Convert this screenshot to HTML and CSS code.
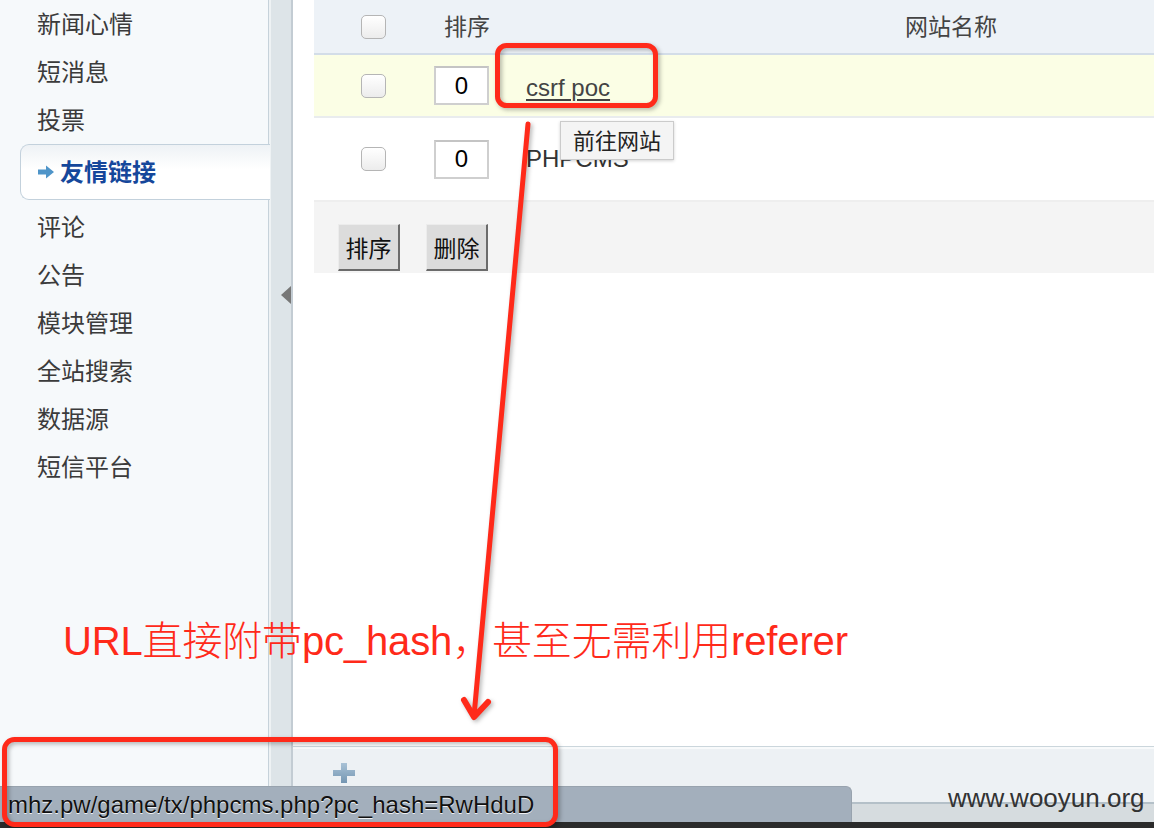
FILE: index.html
```html
<!DOCTYPE html>
<html lang="zh-CN">
<head>
<meta charset="utf-8">
<title>友情链接</title>
<link rel="stylesheet" href="styles.css">
</head>
<body>
<div class="page">
  <div class="main">
    <nav class="sidebar">
      <ul class="nav">
        <li class="nav-item">新闻心情</li>
        <li class="nav-item">短消息</li>
        <li class="nav-item">投票</li>
        <li class="nav-item active">
          <svg class="arrow" width="16" height="14" viewBox="0 0 16 14"><path d="M0 4.5h8V0.5l8 6.5-8 6.5V9.5H0z" fill="#4f95c9"/></svg>
          <span>友情链接</span>
        </li>
        <li class="nav-item">评论</li>
        <li class="nav-item">公告</li>
        <li class="nav-item">模块管理</li>
        <li class="nav-item">全站搜索</li>
        <li class="nav-item">数据源</li>
        <li class="nav-item">短信平台</li>
      </ul>
    </nav>
    <div class="splitter"><span class="collapse"></span></div>
    <div class="content">
      <div class="list">
        <div class="row head">
          <div class="cell-check"><input class="check" type="checkbox"></div>
          <div class="cell-order head-order">排序</div>
          <div class="cell-name head-name">网站名称</div>
        </div>
        <div class="row r1">
          <div class="cell-check"><input class="check" type="checkbox"></div>
          <div class="cell-order"><input class="order" type="text" value="0"></div>
          <div class="cell-name"><a class="link" href="#">csrf poc</a></div>
        </div>
        <div class="row r2">
          <div class="cell-check"><input class="check" type="checkbox"></div>
          <div class="cell-order"><input class="order" type="text" value="0"></div>
          <div class="cell-name"><span class="plain">PHPCMS</span></div>
          <div class="tooltip">前往网站</div>
        </div>
        <div class="actions">
          <button class="btn">排序</button>
          <button class="btn">删除</button>
        </div>
      </div>
      <div class="fill"></div>
      <div class="toolbar">
        <svg class="plus" width="22" height="20" viewBox="0 0 22 20">
          <defs><linearGradient id="pg" x1="0" y1="0" x2="0" y2="1"><stop offset="0" stop-color="#a9c2d6"/><stop offset="1" stop-color="#7496b2"/></linearGradient></defs>
          <path d="M8 0h6v7h8v6h-8v7H8v-7H0V7h8z" fill="url(#pg)"/>
        </svg>
      </div>
    </div>
  </div>
  <div class="browserbar"></div>
  <div class="edge"></div>
  <div class="statusbar">mhz.pw/game/tx/phpcms.php?pc_hash=RwHduD</div>
  <div class="watermark">www.wooyun.org</div>
  <svg class="annot" width="1154" height="828" viewBox="0 0 1154 828">
    <g class="red" fill="none" stroke="#ff2a1a" stroke-linecap="round" stroke-linejoin="round">
      <rect x="497.5" y="45.5" width="158" height="60" rx="9" stroke-width="5"/>
      <path d="M528 124L474 716" stroke-width="5"/>
      <path d="M464 700L474 717L488 702" stroke-width="6"/>
      <rect x="4.5" y="739.5" width="551" height="85" rx="10" stroke-width="5"/>
    </g>
  </svg>
  <div class="annot-text">URL直接附带pc_hash，甚至无需利用referer</div>
</div>
</body>
</html>
```

FILE: styles.css
```css
html, body {
  margin: 0;
  padding: 0;
}
body {
  font-family: "Noto Sans CJK SC", "Liberation Sans", sans-serif;
  color: #333;
  background: #fff;
}
.page {
  position: relative;
  width: 1154px;
  height: 828px;
  overflow: hidden;
  display: flex;
  flex-direction: column;
  background: #fff;
}
.main {
  height: 802px;
  display: flex;
}

/* sidebar */
.sidebar {
  width: 268px;
  flex: none;
  border-right: 1px solid #c6d2da;
  background: #f6f9fb;
}
.nav {
  list-style: none;
  margin: -1px 0 0;
  padding: 0;
}
.nav-item {
  height: 48px;
  line-height: 48px;
  padding-left: 37px;
  font-size: 24px;
  color: #3b3b3b;
}
.nav-item.active {
  position: relative;
  height: 54px;
  line-height: 54px;
  margin: 1px -2px 2px 20px;
  padding-left: 17px;
  border: 1px solid #c3d1dc;
  border-right: 0;
  border-radius: 9px 0 0 9px;
  background: linear-gradient(#eef2f5, #ffffff 45%);
  color: #15479b;
  font-weight: bold;
  display: flex;
  align-items: center;
  gap: 6px;
}
.nav-item.active span {
  position: relative;
  top: -1px;
}
.arrow {
  flex: none;
}

/* splitter */
.splitter {
  width: 20px;
  flex: none;
  border-left: 2px solid #eef2f4;
  border-right: 2px solid #c3ccd3;
  background: #dde4e8;
  display: flex;
  justify-content: flex-end;
  align-items: flex-start;
  padding-top: 286px;
}
.collapse {
  width: 0;
  height: 0;
  border-top: 9px solid transparent;
  border-bottom: 9px solid transparent;
  border-right: 10px solid #777;
}

/* content */
.content {
  flex: 1;
  min-width: 0;
  display: flex;
  flex-direction: column;
}
.list {
  padding-left: 21px;
}
.row {
  display: flex;
  align-items: center;
  position: relative;
}
.cell-check {
  width: 120px;
  flex: none;
  padding-left: 47px;
  box-sizing: border-box;
  display: flex;
  align-items: center;
}
.cell-order {
  width: 92px;
  flex: none;
  display: flex;
  align-items: center;
}
.cell-name {
  flex: 1;
}
.row.head {
  height: 53px;
  background: #edf2f7;
  border-bottom: 2px solid #d3dde8;
  font-size: 23px;
  color: #444;
}
.head-order {
  padding-left: 10px;
  box-sizing: border-box;
  position: relative;
  top: -2px;
}
.head-name {
  padding-left: 379px;
  position: relative;
  top: -2px;
}
.row.r1 {
  height: 61px;
  background: #fbfee5;
  border-bottom: 2px solid #e9ecee;
}
.row.r2 {
  height: 82px;
  border-bottom: 2px solid #eeeeee;
}
.check {
  appearance: none;
  -webkit-appearance: none;
  width: 25px;
  height: 24px;
  margin: 0;
  border: 1px solid #b5b5b5;
  border-radius: 5px;
  background: linear-gradient(#ffffff, #ececec);
  box-sizing: border-box;
}
.order {
  width: 55px;
  height: 39px;
  box-sizing: border-box;
  border: 2px solid #cfcfcf;
  border-top-color: #c4c4c4;
  padding: 0;
  margin: 0;
  background: #fff;
  font-family: "Liberation Sans", sans-serif;
  font-size: 24px;
  color: #000;
  text-align: center;
  outline: none;
}
.link {
  font-family: "Liberation Sans", sans-serif;
  font-size: 24px;
  color: #444;
  text-decoration: underline;
  text-underline-offset: 3px;
  position: relative;
  top: 2px;
}
.plain {
  font-family: "Liberation Sans", sans-serif;
  font-size: 24px;
  color: #333;
}
.tooltip {
  position: absolute;
  left: 246px;
  top: 3px;
  height: 39px;
  box-sizing: border-box;
  padding: 0 12px;
  line-height: 35px;
  font-size: 22px;
  color: #222;
  background: #f4f4f4;
  border: 1px solid #cbcbcb;
  box-shadow: 0 1px 3px rgba(0, 0, 0, 0.18);
}
.actions {
  height: 71px;
  box-sizing: border-box;
  background: #f4f4f4;
  display: flex;
  align-items: flex-end;
  gap: 26px;
  padding: 0 0 2px 24px;
}
.btn {
  width: 62px;
  height: 47px;
  padding: 0;
  margin: 0;
  box-sizing: border-box;
  font-family: "Noto Sans CJK SC", sans-serif;
  font-size: 23px;
  color: #111;
  background: #dcdcdc;
  border-style: solid;
  border-width: 1px 2px 2px 1px;
  border-color: #ececec #6b6b6b #6b6b6b #ececec;
}
.fill {
  flex: 1;
  background: #fff;
}
.toolbar {
  height: 56px;
  box-sizing: border-box;
  border-top: 1px solid #cbd6dc;
  box-shadow: inset 0 2px 0 #f8fafb;
  background: #edf1f4;
  padding: 16px 0 0 40px;
}
.plus {
  display: block;
}

/* browser chrome */
.browserbar {
  height: 20px;
  box-sizing: border-box;
  border-top: 2px solid #b4c0c8;
  background: #d6dcdf;
}
.edge {
  height: 6px;
  background: #2b2b2b;
}
.statusbar {
  position: absolute;
  left: 0;
  top: 786px;
  width: 852px;
  height: 36px;
  box-sizing: border-box;
  padding-left: 8px;
  background: #a3afbc;
  border-top: 1px solid #98a3ae;
  border-right: 1px solid #98a3ae;
  border-top-right-radius: 6px;
  font-family: "Liberation Sans", sans-serif;
  font-size: 24px;
  line-height: 36px;
  color: #111;
  text-shadow: 0 1px 0 rgba(255, 255, 255, 0.85);
  white-space: nowrap;
}
.watermark {
  position: absolute;
  left: 948px;
  top: 783px;
  font-family: "Liberation Sans", sans-serif;
  font-size: 26px;
  line-height: 30px;
  color: #333;
}

/* annotations */
.annot {
  position: absolute;
  left: 0;
  top: 0;
  pointer-events: none;
}
.red {
  filter: drop-shadow(2px 2px 2px rgba(0, 0, 0, 0.28));
}
.annot-text {
  position: absolute;
  left: 63px;
  top: 621px;
  font-family: "Liberation Sans", "Noto Sans CJK SC", sans-serif;
  font-size: 40px;
  line-height: 40px;
  font-weight: 300;
  letter-spacing: -0.15px;
  color: #ff2a1a;
  white-space: nowrap;
  pointer-events: none;
}
```
